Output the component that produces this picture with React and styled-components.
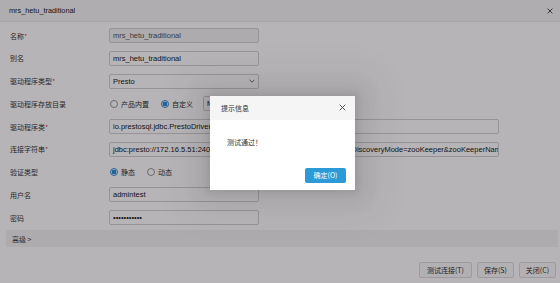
import React from "react";
import styled, { createGlobalStyle } from "styled-components";

const Global = createGlobalStyle`
  html, body {
    margin: 0;
    padding: 0;
    background: #fff;
  }
  body {
    font-family: "Noto Sans CJK SC", "Liberation Sans", sans-serif;
    font-size: 7px;
    color: #333;
  }
`;

const Window = styled.div`
  position: relative;
  width: 560px;
  height: 283px;
  display: flex;
  flex-direction: column;
  background: #fff;
  overflow: hidden;
`;

const TitleBar = styled.div`
  height: 21px;
  flex: none;
  display: flex;
  align-items: center;
  justify-content: space-between;
  padding: 0 4px 0 9px;
  background: #f6f6f6;
  border-bottom: 1px solid #e8e8e8;
  font-family: "Liberation Sans", sans-serif;
  font-size: 7.3px;
  color: #222;
`;

const Close = styled.span`
  width: 12px;
  height: 12px;
  display: flex;
  align-items: center;
  justify-content: center;
`;

const Form = styled.div`
  display: flex;
  flex-direction: column;
  gap: 7.75px;
  padding: 6px 0 0 10px;
`;

const Row = styled.div`
  height: 15px;
  display: flex;
  align-items: center;
`;

const Label = styled.div`
  width: 99px;
  flex: none;
  color: #3a3a3a;
`;

const Star = styled.span`
  color: #e8474c;
`;

const Input = styled.div`
  box-sizing: border-box;
  height: 15px;
  width: ${(p) => p.$w}px;
  flex: none;
  display: flex;
  align-items: center;
  padding: 0 3px;
  border: 1px solid #d2d2d2;
  border-radius: 2px;
  background: ${(p) => (p.$readonly ? "#f2f2f2" : "#fff")};
  color: ${(p) => (p.$readonly ? "#555" : "#222")};
  font-family: "Liberation Sans", sans-serif;
  font-size: 7.5px;
  white-space: nowrap;
  overflow: hidden;
  justify-content: ${(p) => (p.$select ? "space-between" : "flex-start")};
  margin-left: ${(p) => p.$ml || 0}px;
`;

const Radios = styled.div`
  display: flex;
  align-items: center;
  gap: ${(p) => p.$gap}px;
  padding-left: 1px;
`;

const RadioItem = styled.label`
  display: flex;
  align-items: center;
  gap: 3px;
  color: #333;
`;

const Dot = styled.span`
  box-sizing: border-box;
  width: 8px;
  height: 8px;
  border-radius: 50%;
  border: 1px solid ${(p) => (p.$on ? "#2f8fd8" : "#999")};
  background: ${(p) => (p.$on ? "radial-gradient(circle, #2f8fd8 0 2.2px, #fff 2.6px)" : "#fff")};
`;

const Advanced = styled.div`
  height: 17px;
  margin: 5px 2px 0 6px;
  display: flex;
  align-items: center;
  padding-left: 6px;
  background: #f2f2f2;
  color: #444;
`;

const Footer = styled.div`
  display: flex;
  justify-content: flex-end;
  gap: 5px;
  padding: 15px 4px 0 0;
`;

const Button = styled.div`
  box-sizing: border-box;
  height: 16px;
  padding: 0 ${(p) => p.$px || 7}px;
  display: flex;
  align-items: center;
  border: 1px solid #dcdcdc;
  border-radius: 2px;
  background: #fafafa;
  color: #333;
`;

const Mask = styled.div`
  position: absolute;
  inset: 0;
  background: rgba(6, 0, 6, 0.295);
  display: flex;
  align-items: center;
  justify-content: center;
`;

const Dialog = styled.div`
  width: 145px;
  height: 94px;
  margin: 2px 0 0 5px;
  display: flex;
  flex-direction: column;
  background: #fff;
  box-shadow: 0 0 6px 3px rgba(0, 0, 0, 0.07), 0 0 18px 12px rgba(0, 0, 0, 0.05),
    0 0 36px 26px rgba(0, 0, 0, 0.045);
`;

const DialogHead = styled.div`
  height: 24px;
  flex: none;
  display: flex;
  align-items: center;
  justify-content: space-between;
  padding: 0 9px 0 11px;
  background: #f5f5f5;
  color: #333;
`;

const DialogBody = styled.div`
  flex: 1;
  padding: 17px 0 0 17px;
  color: #333;
`;

const DialogFoot = styled.div`
  display: flex;
  justify-content: flex-end;
  padding: 0 9px 7px 0;
`;

const Primary = styled.div`
  width: 41px;
  height: 15px;
  display: flex;
  align-items: center;
  justify-content: center;
  border-radius: 2px;
  background: #2c9ad6;
  color: #fff;
`;

const X = ({ size = 6, color = "#333" }) => (
  <svg width={size} height={size} viewBox="0 0 10 10">
    <path d="M1 1 L9 9 M9 1 L1 9" stroke={color} strokeWidth="1.3" fill="none" />
  </svg>
);

const Chevron = () => (
  <svg width="6" height="4" viewBox="0 0 10 6">
    <path d="M1 1 L5 5 L9 1" stroke="#444" strokeWidth="1.3" fill="none" />
  </svg>
);

const Radio = ({ on, children }) => (
  <RadioItem>
    <Dot $on={on} />
    {children}
  </RadioItem>
);

export default function App() {
  return (
    <Window>
      <Global />
      <TitleBar>
        <span>mrs_hetu_traditional</span>
        <Close>
          <X size={6} color="#222" />
        </Close>
      </TitleBar>
      <Form>
        <Row>
          <Label>名称<Star>*</Star></Label>
          <Input $w={150} $readonly>mrs_hetu_traditional</Input>
        </Row>
        <Row>
          <Label>别名</Label>
          <Input $w={150}>mrs_hetu_traditional</Input>
        </Row>
        <Row>
          <Label>驱动程序类型<Star>*</Star></Label>
          <Input $w={150} $select>
            <span>Presto</span>
            <Chevron />
          </Input>
        </Row>
        <Row>
          <Label>驱动程序存放目录</Label>
          <Radios $gap={12}>
            <Radio>产品内置</Radio>
            <Radio on>自定义</Radio>
          </Radios>
          <Input $w={56} $ml={10}>MRS_Presto</Input>
        </Row>
        <Row>
          <Label>驱动程序类<Star>*</Star></Label>
          <Input $w={390}>io.prestosql.jdbc.PrestoDriver</Input>
        </Row>
        <Row>
          <Label>连接字符串<Star>*</Star></Label>
          <Input $w={390}>
            jdbc:presto://172.16.5.51:24002,172.16.5.52:24002/hive/default?serviceDiscoveryMode=zooKeeper&amp;zooKeeperNamespace=hsbroker
          </Input>
        </Row>
        <Row>
          <Label>验证类型</Label>
          <Radios $gap={12}>
            <Radio on>静态</Radio>
            <Radio>动态</Radio>
          </Radios>
        </Row>
        <Row>
          <Label>用户名</Label>
          <Input $w={150}>admintest</Input>
        </Row>
        <Row>
          <Label>密码</Label>
          <Input $w={150}>•••••••••••</Input>
        </Row>
      </Form>
      <Advanced>高级 &gt;</Advanced>
      <Footer>
        <Button>测试连接(T)</Button>
        <Button $px={6}>保存(S)</Button>
        <Button $px={6}>关闭(C)</Button>
      </Footer>
      <Mask>
        <Dialog>
          <DialogHead>
            <span>提示信息</span>
            <X size={7} color="#444" />
          </DialogHead>
          <DialogBody>测试通过！</DialogBody>
          <DialogFoot>
            <Primary>确定(O)</Primary>
          </DialogFoot>
        </Dialog>
      </Mask>
    </Window>
  );
}
